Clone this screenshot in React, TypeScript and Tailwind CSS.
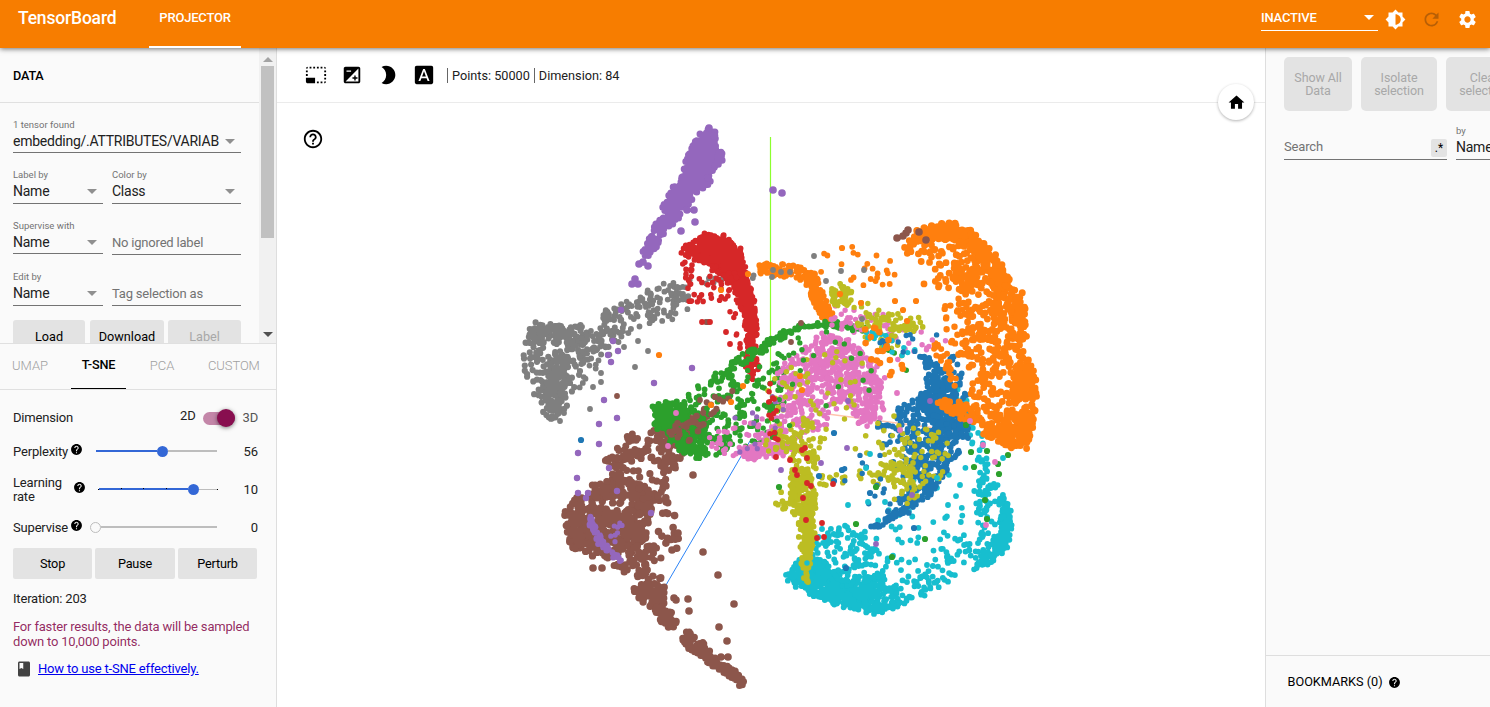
import React, { useMemo } from "react";
import {
  MdBrightness2,
  MdBrightness6,
  MdClass,
  MdExposure,
  MdFontDownload,
  MdHelp,
  MdHelpOutline,
  MdHome,
  MdPhotoSizeSelectSmall,
  MdRefresh,
  MdSettings,
} from "react-icons/md";

/* ---------- scatter plot ---------- */

type Cloud = { c: string; r: number; n: number; poly: number[] };
type Dots = { c: string; r: number; at: number[] };

const PURPLE = "#9467bd";
const RED = "#d62728";
const GREY = "#7f7f7f";
const ORANGE = "#ff7f0e";
const OLIVE = "#bcbd22";
const GREEN = "#2ca02c";
const PINK = "#e377c2";
const BLUE = "#1f77b4";
const CYAN = "#17becf";
const BROWN = "#8c564b";

const layers: (Cloud | Dots)[] = [
  // cyan arc
  { c: CYAN, r: 2.8, n: 230, poly: [784, 575, 795, 560, 812, 550, 826, 562, 850, 580, 880, 577, 905, 592, 920, 600, 900, 608, 885, 614, 868, 615, 842, 609, 818, 599, 800, 590, 786, 581] },
  { c: CYAN, r: 2.8, n: 250, poly: [784, 575, 795, 562, 812, 550, 835, 580, 870, 598, 910, 602, 885, 613, 860, 613, 818, 599, 800, 590] },
  { c: CYAN, r: 2.8, n: 90, poly: [835, 585, 850, 578, 880, 572, 886, 590, 870, 608] },
  { c: CYAN, r: 2.8, n: 110, poly: [812, 550, 818, 530, 850, 522, 880, 545, 888, 580, 840, 592] },
  { c: CYAN, r: 2.8, n: 60, poly: [815, 550, 825, 532, 880, 505, 915, 510, 960, 510, 975, 560, 920, 603, 880, 580] },
  { c: CYAN, r: 2.8, n: 45, poly: [880, 590, 925, 565, 960, 545, 985, 530, 992, 550, 960, 577, 915, 606] },
  { c: CYAN, r: 2.8, n: 145, poly: [970, 572, 985, 545, 998, 530, 1002, 495, 1010, 500, 1014, 520, 1008, 550, 985, 568] },
  { c: CYAN, r: 2.8, n: 65, poly: [972, 500, 980, 450, 988, 446, 992, 478, 1005, 490, 1010, 510, 994, 530, 978, 550, 975, 520] },
  { c: CYAN, r: 2.8, n: 48, poly: [955, 380, 968, 400, 985, 440, 992, 478, 980, 480, 970, 440, 950, 410] },
  { c: CYAN, r: 2.8, n: 16, poly: [915, 475, 960, 460, 985, 470, 990, 540, 940, 560, 880, 530] },
  { c: CYAN, r: 2.8, n: 10, poly: [860, 560, 920, 520, 960, 560, 940, 598] },
  // blue
  { c: BLUE, r: 2.8, n: 150, poly: [909, 352, 925, 355, 950, 370, 962, 395, 975, 415, 965, 430, 940, 440, 905, 435, 880, 428, 900, 405, 925, 380, 920, 362] },
  { c: BLUE, r: 2.8, n: 160, poly: [912, 352, 928, 354, 952, 375, 958, 400, 955, 425, 925, 425, 915, 405, 925, 385, 925, 368] },
  { c: BLUE, r: 2.8, n: 280, poly: [900, 440, 940, 420, 975, 418, 962, 450, 945, 480, 925, 502, 905, 520, 885, 512, 905, 490, 915, 465] },
  { c: BLUE, r: 2.8, n: 75, poly: [875, 420, 970, 405, 970, 440, 940, 480, 895, 490, 880, 470] },
  { c: BLUE, r: 2.8, n: 42, poly: [868, 526, 890, 514, 912, 500, 919, 504, 900, 516, 876, 530] },
  { c: BLUE, r: 2.8, n: 24, poly: [953, 345, 965, 370, 968, 400, 960, 420, 942, 375] },
  { c: OLIVE, r: 2.6, n: 58, poly: [875, 425, 930, 420, 955, 440, 948, 475, 915, 508, 890, 505, 900, 480, 875, 465] },
  { c: OLIVE, r: 2.6, n: 50, poly: [880, 465, 900, 458, 920, 472, 918, 490, 905, 502, 885, 480] },
  // orange sheet
  { c: ORANGE, r: 3.6, n: 130, poly: [912, 230, 925, 224, 948, 220, 972, 228, 976, 246, 960, 242, 930, 240, 910, 240] },
  { c: ORANGE, r: 3.3, n: 62, poly: [897, 240, 925, 235, 960, 243, 980, 270, 985, 320, 970, 300, 945, 290, 918, 296, 930, 265, 900, 254] },
  { c: ORANGE, r: 3.4, n: 130, poly: [955, 238, 985, 243, 1002, 262, 1013, 290, 1000, 305, 985, 290, 955, 295, 948, 265] },
  { c: ORANGE, r: 3.4, n: 100, poly: [968, 228, 980, 238, 1001, 256, 1012, 282, 1008, 300, 990, 275, 968, 250] },
  { c: ORANGE, r: 3.3, n: 330, poly: [975, 290, 1010, 285, 1027, 298, 1029, 350, 1038, 380, 1036, 420, 1027, 450, 1005, 450, 985, 438, 970, 420, 968, 390, 956, 350] },
  { c: ORANGE, r: 3.4, n: 60, poly: [1000, 280, 1015, 285, 1028, 298, 1029, 340, 1012, 360, 1005, 310] },
  { c: ORANGE, r: 3.4, n: 180, poly: [1015, 360, 1028, 360, 1038, 385, 1037, 420, 1028, 452, 1012, 452, 990, 442, 984, 430, 1005, 415] },
  { c: ORANGE, r: 3.1, n: 32, poly: [940, 300, 975, 290, 975, 350, 945, 345] },
  { c: ORANGE, r: 3.2, n: 38, poly: [935, 400, 960, 395, 978, 410, 986, 425, 970, 425, 945, 415] },
  { c: ORANGE, r: 2.9, n: 28, poly: [928, 338, 942, 342, 954, 368, 962, 380, 955, 392, 942, 365, 930, 348] },
  { c: ORANGE, r: 2.8, n: 24, poly: [820, 245, 855, 245, 895, 260, 897, 290, 855, 292, 820, 275] },
  { c: ORANGE, r: 3, n: 58, poly: [752, 264, 785, 262, 810, 267, 820, 280, 810, 286, 790, 278, 752, 276] },
  { c: ORANGE, r: 2.9, n: 120, poly: [802, 272, 816, 272, 824, 290, 834, 315, 830, 325, 820, 318, 810, 298] },
  // brown
  { c: BROWN, r: 3.6, n: 150, poly: [560, 517, 568, 498, 590, 488, 620, 487, 650, 500, 645, 545, 630, 555, 610, 560, 590, 558, 568, 547] },
  { c: BROWN, r: 3.6, n: 210, poly: [562, 515, 582, 492, 600, 505, 650, 510, 650, 540, 615, 562, 590, 555, 568, 547] },
  { c: BROWN, r: 3.5, n: 95, poly: [590, 484, 615, 475, 640, 480, 660, 500, 650, 520, 630, 500, 585, 502] },
  { c: BROWN, r: 3.5, n: 52, poly: [600, 468, 615, 450, 655, 448, 668, 470, 672, 505, 645, 500, 600, 482] },
  { c: BROWN, r: 3.4, n: 65, poly: [604, 458, 630, 432, 655, 436, 652, 455, 680, 452, 680, 470, 660, 477, 655, 460, 604, 464] },
  { c: BROWN, r: 3.4, n: 78, poly: [648, 430, 675, 418, 700, 406, 716, 405, 700, 435, 682, 465, 655, 448] },
  { c: BROWN, r: 3.5, n: 52, poly: [612, 566, 622, 550, 655, 536, 662, 560, 650, 575, 630, 582] },
  { c: BROWN, r: 3.6, n: 60, poly: [630, 588, 650, 574, 662, 576, 668, 592, 668, 605, 655, 612, 644, 606] },
  { c: BROWN, r: 3.6, n: 48, poly: [650, 606, 668, 602, 680, 626, 672, 633, 658, 620] },
  { c: BROWN, r: 3.4, n: 110, poly: [676, 638, 688, 630, 710, 645, 716, 657, 740, 672, 749, 684, 740, 687, 710, 668, 690, 652] },
  { c: BROWN, r: 3.7, n: 20, poly: [655, 460, 672, 480, 685, 545, 675, 555, 655, 540] },
  { c: PURPLE, r: 2.8, n: 22, poly: [584, 510, 592, 515, 602, 530, 612, 548, 629, 562, 624, 566, 607, 555, 592, 540, 584, 520] },
  { c: PURPLE, r: 2.8, n: 34, poly: [584, 512, 594, 518, 606, 540, 615, 548, 629, 558, 624, 567, 605, 552, 590, 535] },
  { c: PURPLE, r: 2.5, n: 8, poly: [608, 520, 625, 523, 622, 545, 612, 550] },
  // grey
  { c: GREY, r: 3, n: 190, poly: [519, 335, 535, 320, 560, 325, 585, 322, 586, 350, 580, 385, 570, 402, 562, 420, 545, 423, 536, 400, 524, 375, 516, 350] },
  { c: GREY, r: 2.9, n: 185, poly: [520, 335, 540, 322, 580, 325, 590, 333, 570, 355, 567, 395, 557, 423, 545, 420, 545, 385, 553, 350] },
  { c: GREY, r: 2.9, n: 65, poly: [570, 328, 590, 325, 610, 302, 630, 305, 633, 330, 610, 350, 585, 365, 578, 350] },
  { c: GREY, r: 2.8, n: 75, poly: [595, 315, 630, 297, 665, 280, 692, 280, 675, 318, 650, 326, 640, 315, 605, 328] },
  { c: GREY, r: 2.8, n: 20, poly: [620, 300, 635, 290, 690, 282, 698, 310, 640, 335] },
  { c: GREY, r: 2.8, n: 28, poly: [665, 282, 700, 276, 770, 265, 770, 276, 700, 292, 680, 310] },
  { c: GREY, r: 2.8, n: 24, poly: [580, 330, 618, 325, 620, 345, 600, 370, 578, 395] },
  // red
  { c: RED, r: 2.8, n: 120, poly: [674, 258, 680, 245, 705, 232, 725, 233, 742, 250, 746, 275, 720, 275, 700, 258] },
  { c: RED, r: 2.8, n: 360, poly: [677, 250, 695, 238, 715, 232, 728, 236, 743, 250, 748, 275, 755, 302, 745, 310, 735, 290, 722, 280, 710, 266, 690, 260] },
  { c: RED, r: 2.7, n: 52, poly: [682, 260, 740, 270, 745, 310, 720, 305, 688, 305] },
  { c: RED, r: 2.8, n: 170, poly: [732, 285, 750, 275, 755, 300, 759, 332, 754, 350, 747, 350, 743, 320] },
  { c: RED, r: 2.7, n: 44, poly: [744, 333, 759, 333, 760, 365, 756, 387, 742, 365] },
  { c: RED, r: 2.6, n: 6, poly: [720, 300, 735, 310, 745, 345, 730, 350] },
  // green
  { c: GREEN, r: 3, n: 200, poly: [651, 405, 665, 400, 680, 401, 700, 410, 712, 435, 702, 460, 685, 457, 665, 437, 650, 425] },
  { c: GREEN, r: 3, n: 130, poly: [653, 404, 675, 400, 688, 408, 685, 430, 653, 428] },
  { c: GREEN, r: 2.8, n: 115, poly: [675, 398, 705, 380, 740, 355, 735, 375, 750, 395, 745, 430, 715, 460, 690, 462, 695, 420] },
  { c: GREEN, r: 2.8, n: 50, poly: [704, 380, 725, 365, 745, 350, 775, 333, 770, 350, 740, 370, 712, 388] },
  { c: GREEN, r: 2.8, n: 90, poly: [762, 340, 800, 324, 840, 319, 870, 325, 866, 335, 830, 328, 800, 331, 770, 347] },
  { c: GREEN, r: 2.6, n: 90, poly: [740, 370, 790, 345, 785, 400, 770, 450, 715, 455, 735, 410] },
  { c: BROWN, r: 3.2, n: 22, poly: [652, 436, 670, 425, 700, 410, 712, 420, 690, 443] },
  { c: BROWN, r: 3, n: 12, poly: [690, 420, 720, 385, 750, 370, 750, 382, 720, 412, 700, 430] },
  // pink
  { c: PINK, r: 2.7, n: 230, poly: [776, 370, 795, 345, 825, 330, 850, 338, 870, 355, 886, 375, 885, 420, 865, 430, 840, 410, 810, 405, 776, 415] },
  { c: PINK, r: 2.7, n: 220, poly: [815, 335, 845, 335, 870, 355, 883, 382, 878, 420, 860, 428, 842, 400, 815, 370] },
  { c: PINK, r: 2.7, n: 165, poly: [775, 370, 820, 345, 840, 400, 830, 430, 790, 445, 740, 460, 745, 440, 778, 415] },
  { c: PINK, r: 2.7, n: 85, poly: [727, 450, 755, 443, 790, 440, 800, 448, 780, 458, 745, 461] },
  { c: PINK, r: 2.6, n: 38, poly: [690, 440, 770, 410, 775, 440, 730, 460] },
  { c: PINK, r: 2.6, n: 42, poly: [830, 290, 855, 305, 890, 315, 895, 340, 860, 340, 830, 325] },
  { c: PINK, r: 2.6, n: 22, poly: [860, 315, 945, 330, 950, 350, 905, 370, 880, 350] },
  // olive
  { c: OLIVE, r: 2.7, n: 45, poly: [828, 288, 840, 283, 853, 287, 852, 305, 835, 308, 826, 300] },
  { c: OLIVE, r: 2.7, n: 42, poly: [870, 318, 895, 310, 926, 318, 925, 333, 890, 332, 870, 328] },
  { c: OLIVE, r: 2.6, n: 45, poly: [840, 285, 870, 295, 900, 315, 905, 365, 870, 345, 845, 320] },
  { c: OLIVE, r: 2.6, n: 58, poly: [765, 380, 810, 340, 860, 350, 870, 400, 820, 450, 765, 455] },
  { c: OLIVE, r: 2.7, n: 85, poly: [768, 450, 780, 438, 812, 438, 820, 460, 810, 490, 785, 490, 790, 455] },
  { c: OLIVE, r: 2.7, n: 25, poly: [775, 425, 820, 415, 815, 445, 780, 450] },
  { c: OLIVE, r: 2.8, n: 220, poly: [796, 475, 812, 475, 818, 505, 816, 535, 812, 560, 810, 584, 803, 586, 800, 560, 797, 525, 790, 500] },
  { c: OLIVE, r: 2.8, n: 40, poly: [770, 510, 782, 485, 800, 480, 815, 495, 815, 520, 790, 513] },
  { c: OLIVE, r: 2.7, n: 38, poly: [815, 470, 850, 470, 915, 460, 918, 485, 870, 485, 820, 490] },
  { c: OLIVE, r: 2.7, n: 12, poly: [850, 425, 890, 410, 925, 440, 900, 465, 850, 460] },
  { c: GREEN, r: 2.6, n: 30, poly: [770, 340, 860, 320, 915, 370, 870, 400, 800, 420, 765, 450] },
  { c: CYAN, r: 2.6, n: 16, poly: [850, 322, 890, 330, 920, 350, 900, 358, 860, 335] },
  { c: BLUE, r: 2.6, n: 10, poly: [855, 325, 945, 330, 935, 350, 895, 358] },
  { c: ORANGE, r: 3.2, n: 20, poly: [860, 325, 905, 320, 908, 375, 885, 378, 868, 370] },
  { c: PURPLE, r: 2.5, n: 12, poly: [715, 430, 770, 385, 800, 420, 775, 470, 735, 465] },
  { c: RED, r: 2.6, n: 14, poly: [765, 375, 780, 380, 778, 410, 785, 450, 768, 440] },
  { c: BLUE, r: 2.6, n: 14, poly: [820, 470, 880, 445, 895, 475, 890, 540, 865, 510] },
  // purple arm
  { c: PURPLE, r: 3.4, n: 440, poly: [704, 129, 711, 124, 718, 136, 718, 160, 712, 182, 700, 192, 689, 206, 676, 222, 663, 238, 653, 256, 641, 260, 644, 242, 657, 218, 669, 192, 681, 172, 684, 156, 692, 142] },
  { c: PURPLE, r: 3.4, n: 16, poly: [715, 146, 721, 147, 725, 158, 720, 168, 712, 168] },
  // individual points
  { c: PURPLE, r: 3.7, at: [709, 128, 714, 136, 639, 264, 648, 266, 643, 262, 635, 282, 632, 284, 638, 284, 635, 279, 695, 222, 681, 231, 694, 210, 687, 210, 708, 178, 773, 190, 782, 193] },
  { c: PURPLE, r: 3.1, at: [621, 310, 613, 341, 618, 351, 608, 355, 611, 362, 692, 368, 654, 383, 604, 400, 617, 418, 599, 424, 578, 453, 609, 468, 577, 478, 578, 493, 588, 493, 586, 498, 599, 444, 617, 491, 651, 513] },
  { c: PURPLE, r: 2.8, at: [847, 448, 821, 463, 781, 470, 876, 544, 912, 495, 848, 401, 930, 401] },
  { c: GREY, r: 2.8, at: [814, 256, 841, 271, 864, 270, 826, 281, 781, 272, 790, 272, 862, 319, 772, 277, 773, 270, 638, 341, 648, 351, 635, 367, 601, 373, 593, 387, 601, 382, 590, 409, 564, 413, 560, 421, 582, 338, 624, 347] },
  { c: GREEN, r: 3, at: [1008, 455, 971, 452, 974, 467, 999, 474, 985, 500, 987, 519, 925, 539, 892, 557, 856, 524, 779, 487, 998, 464, 987, 451, 876, 487, 966, 425] },
  { c: BROWN, r: 3.7, at: [903, 236, 897, 238, 908, 230, 906, 233, 919, 232, 926, 240, 693, 475, 703, 552, 718, 575, 734, 604, 719, 627, 727, 641, 688, 599, 674, 598, 689, 611, 676, 600, 678, 533, 672, 550, 593, 568, 602, 568, 721, 657, 728, 657] },
  { c: BROWN, r: 2.8, at: [617, 396, 706, 322, 708, 322, 801, 323, 791, 342, 700, 400] },
  { c: ORANGE, r: 3, at: [659, 355, 721, 290, 842, 248, 916, 301, 895, 301, 861, 303, 743, 386, 711, 405, 731, 402, 903, 310, 800, 376, 802, 390, 840, 294, 907, 321, 748, 274] },
  { c: BLUE, r: 3, at: [581, 440, 819, 476, 834, 481, 870, 493, 842, 470, 834, 433, 846, 568, 914, 528] },
  { c: RED, r: 2.8, at: [795, 470, 797, 475, 807, 483, 811, 486, 803, 498, 822, 523, 824, 537, 817, 538, 776, 457, 790, 460, 807, 458, 802, 450, 833, 484, 806, 520, 702, 322, 710, 322, 726, 332, 730, 344, 740, 348, 805, 448] },
  { c: PINK, r: 2.8, at: [983, 445, 995, 462, 986, 525, 900, 430, 897, 393, 676, 413, 668, 446, 970, 421] },
  { c: CYAN, r: 2.8, at: [870, 454, 848, 505, 866, 468, 885, 502, 937, 478, 868, 502, 1003, 458, 960, 485, 948, 505, 822, 529] },
  { c: CYAN, r: 2.6, at: [807, 563] },
];

function insideInset(x: number, y: number, p: number[], pad: number) {
  let inside = false;
  const n = p.length / 2;
  for (let i = 0, j = n - 1; i < n; j = i++) {
    const ax = p[2 * i];
    const ay = p[2 * i + 1];
    const bx = p[2 * j];
    const by = p[2 * j + 1];
    if (ay > y !== by > y && x < ((bx - ax) * (y - ay)) / (by - ay) + ax) inside = !inside;
    const dx = bx - ax;
    const dy = by - ay;
    const t = Math.max(0, Math.min(1, ((x - ax) * dx + (y - ay) * dy) / (dx * dx + dy * dy)));
    if (Math.hypot(x - ax - t * dx, y - ay - t * dy) < pad) return false;
  }
  return inside;
}

function buildPaths() {
  let seed = 20231;
  const rnd = () => {
    seed = (seed * 1664525 + 1013904223) >>> 0;
    return seed / 4294967296;
  };
  return layers.map((l) => {
    let d = "";
    if ("at" in l) {
      for (let i = 0; i < l.at.length; i += 2) d += `M${l.at[i]} ${l.at[i + 1]}h.01`;
    } else {
      const xs = l.poly.filter((_, i) => i % 2 === 0);
      const ys = l.poly.filter((_, i) => i % 2 === 1);
      const x0 = Math.min(...xs);
      const y0 = Math.min(...ys);
      const w = Math.max(...xs) - x0;
      const h = Math.max(...ys) - y0;
      for (let k = 0, tries = 0; k < l.n && tries < 40000; tries++) {
        const x = x0 + rnd() * w;
        const y = y0 + rnd() * h;
        if (insideInset(x, y, l.poly, l.r * 0.6)) {
          // a little scatter past the outline keeps the cluster edges ragged
          const jx = x + (rnd() - 0.5) * 3.4;
          const jy = y + (rnd() - 0.5) * 3.4;
          d += `M${jx.toFixed(1)} ${jy.toFixed(1)}h.01`;
          k++;
        }
      }
    }
    return { d, c: l.c, w: l.r * 2 + 0.2 };
  });
}

function Scatter() {
  const paths = useMemo(buildPaths, []);
  return (
    <svg className="block h-[604px] w-[988px]" viewBox="277 103 988 604">
      <path d="M770.5 137V440" stroke="#8cff2e" strokeWidth="1.2" />
      <path d="M750 441L666 585" stroke="#2b83f6" strokeWidth="1" />
      <path d="M820 413L958 431" stroke="#ffc4ae" strokeWidth="1.5" />
      {paths.map((p, i) => (
        <path key={i} d={p.d} stroke={p.c} strokeWidth={p.w} strokeLinecap="round" fill="none" />
      ))}
    </svg>
  );
}

/* ---------- controls ---------- */

function Caret({ className = "text-[#8f8f8f]" }: { className?: string }) {
  return (
    <svg viewBox="0 0 10 5" className={`h-[5px] w-[10px] shrink-0 ${className}`}>
      <path d="M0 0h10L5 5z" fill="currentColor" />
    </svg>
  );
}

function Select({ label, value, className }: { label: string; value: string; className: string }) {
  return (
    <div className={`flex flex-col border-b border-[#737373] ${className}`}>
      <span className="h-3 text-[9.5px] leading-3 text-[#737373]">{label}</span>
      <div className="flex h-5 items-center justify-between pr-[6px]">
        <span className="pb-px text-[14px] leading-[18px] tracking-[-0.25px] whitespace-nowrap text-[#212121]">{value}</span>
        <Caret />
      </div>
    </div>
  );
}

function TextInput({ hint }: { hint: string }) {
  return (
    <div className="flex h-[35px] w-[129px] items-end border-b border-[#737373] pb-[3px] text-[13px] leading-[17px] tracking-[-0.2px] text-[#737373]">
      {hint}
    </div>
  );
}

function Slider({ at, empty, ticks }: { at: string; empty?: boolean; ticks?: boolean }) {
  return (
    <div className="flex h-3 items-center">
      {ticks && <div className="size-px bg-black" />}
      {ticks ? (
        <div className={`flex h-[2px] justify-evenly bg-[#3367d6] ${at}`}>
          <div className="size-px bg-black" />
          <div className="size-px bg-black" />
          <div className="size-px bg-black" />
        </div>
      ) : (
        <div className={`h-[2px] bg-[#3367d6] ${at}`} />
      )}
      <div className={`size-[11px] shrink-0 rounded-full ${empty ? "border border-[#bdbdbd] bg-[#fafafa]" : "bg-[#3367d6]"}`} />
      <div className={`grow bg-[#bdbdbd] ${ticks ? "h-px" : "h-[2px]"}`} />
      {ticks && <div className="size-px bg-black" />}
    </div>
  );
}

function SettingRow({ label, value, className, children, labelClass, trackClass }: {
  label: string; value: string; className: string; labelClass: string; trackClass: string; children: React.ReactNode;
}) {
  return (
    <div className={`flex items-center ${className}`}>
      <span className={`pt-px leading-[14px] ${labelClass}`}>{label}</span>
      <MdHelp className="mb-[3px] size-[13px] shrink-0 text-black" />
      <div className={trackClass}>{children}</div>
      <span className="ml-auto pt-px tracking-normal">{value}</span>
    </div>
  );
}

const flat = "flex items-center justify-center bg-[#e3e3e3] text-[12.7px]";

export default function App() {
  return (
    <div className="flex h-[707px] w-[1490px] flex-col overflow-hidden bg-white font-['Roboto',sans-serif] text-[#212121]">
      <header className="relative z-10 flex h-12 shrink-0 items-start bg-[#f77d00] text-white shadow-[0_1px_5px_rgba(0,0,0,0.55)]">
        <h1 className="mt-[6px] ml-[18px] w-[131px] text-[17.5px] leading-6 font-medium tracking-[-0.18px]">TensorBoard</h1>
        <div className="flex h-12 w-[92px] justify-center border-b-2 border-white pt-[8px] text-[13px] leading-5 font-medium tracking-[-0.2px]">PROJECTOR</div>
        <div className="mt-[5px] ml-auto flex h-[26px] w-[117px] items-center justify-between border-b border-white pr-1 text-[13px] font-medium tracking-[-0.2px]">
          INACTIVE
          <Caret className="text-white" />
        </div>
        <MdBrightness6 className="mt-[9px] ml-[7px] size-[21px]" />
        <MdRefresh className="mt-[9px] ml-[15px] size-[21px] text-[#b85f05]" />
        <MdSettings className="mt-[9px] mr-[12px] ml-[15px] size-[21px]" />
      </header>

      <div className="flex min-h-0 grow">
        <aside className="flex w-[277px] shrink-0 flex-col border-r border-[#dedede] bg-[#fafafa]">
          <section className="flex h-[295px] shrink-0 overflow-hidden">
            <div className="w-[259px] shrink-0">
              <div className="flex h-[55px] items-center border-b border-[#e0e0e0] pt-px pl-[13px] text-[12.7px] font-medium tracking-[-0.2px] text-black">DATA</div>
              <div className="pt-4 pl-[13px]">
                <Select label="1 tensor found" value="embedding/.ATTRIBUTES/VARIAB" className="h-[34px] w-[228px]" />
                <div className="mt-4 flex gap-[9px]">
                  <Select label="Label by" value="Name" className="h-[35px] w-[90px]" />
                  <Select label="Color by" value="Class" className="h-[35px] w-[129px]" />
                </div>
                <div className="mt-4 flex gap-[9px]">
                  <Select label="Supervise with" value="Name" className="h-[34px] w-[90px]" />
                  <TextInput hint="No ignored label" />
                </div>
                <div className="mt-4 flex gap-[9px]">
                  <Select label="Edit by" value="Name" className="h-[35px] w-[90px]" />
                  <TextInput hint="Tag selection as" />
                </div>
                <div className="mt-[14px] flex h-[33px]">
                  <div className={`${flat} w-[72px] rounded-[3px] text-black`}>Load</div>
                  <div className={`${flat} ml-[5px] w-[74px] rounded-[3px] text-black`}>Download</div>
                  <div className={`${flat} ml-1 w-[73px] rounded-[3px] text-[#a8a8a8]`}>Label</div>
                </div>
              </div>
            </div>
            <div className="flex w-[17px] flex-col items-center bg-[#f1f1f1]">
              <div className="flex h-[18px] items-center pt-1"><Caret className="h-[4px] w-[7px] rotate-180 text-[#a3a3a3]" /></div>
              <div className="h-[172px] w-[13px] bg-[#c1c1c1]" />
              <div className="mt-auto flex h-[18px] items-center"><Caret className="h-[4px] w-[7px] text-[#505050]" /></div>
            </div>
          </section>

          <nav className="flex h-[47px] shrink-0 border-y border-[#e0e0e0] text-[13px] leading-[44px] text-[#a0a0a0]">
            <span className="w-[71px] pl-[12px] font-light">UMAP</span>
            <span className="w-[55px] border-b border-black text-center text-[12.7px] leading-[42px] font-medium tracking-[-0.2px] text-black">T-SNE</span>
            <span className="w-[72px] text-center font-light">PCA</span>
            <span className="pl-[10px] font-light tracking-[-0.1px]">CUSTOM</span>
          </nav>

          <section className="flex flex-col pr-[18px] pl-[13px] text-[13px] tracking-[-0.18px]">
            <div className="mt-[16px] flex h-6 items-center">
              <span>Dimension</span>
              <span className="mb-[4px] ml-auto">2D</span>
              <div className="mr-2 ml-[7px] flex h-[13px] w-[32px] items-center justify-end rounded-full bg-[#c386a8]">
                <div className="size-[18px] shrink-0 rounded-full bg-[#880e4f] shadow-[0_1px_4px_rgba(0,0,0,0.5)]" />
              </div>
              <span className="text-[#555]">3D</span>
            </div>
            <SettingRow label="Perplexity" value="56" className="mt-[9px] h-6" labelClass="w-[57px]" trackClass="ml-[13px] w-[121px]">
              <Slider at="w-[61px]" />
            </SettingRow>
            <SettingRow label="Learning rate" value="10" className="mt-[11px] h-[30px]" labelClass="w-[60px]" trackClass="ml-[12px] w-[120px]">
              <Slider at="w-[89px]" ticks />
            </SettingRow>
            <SettingRow label="Supervise" value="0" className="mt-[11px] h-6" labelClass="w-[57px]" trackClass="ml-[7px] w-[127px]">
              <Slider at="w-0" empty />
            </SettingRow>
            <div className="mt-[9px] -mr-px flex h-[31px] gap-[3px] text-black">
              <div className={`${flat} w-[79px] rounded-[2px]`}>Stop</div>
              <div className={`${flat} w-[80px] rounded-[2px]`}>Pause</div>
              <div className={`${flat} w-[79px] rounded-[2px]`}>Perturb</div>
            </div>
            <p className="mt-[12px] leading-[15px]">Iteration: 203</p>
            <p className="mt-[13px] w-[245px] leading-[15px] text-[#880e4f]/90">For faster results, the data will be sampled down to 10,000 points.</p>
            <div className="mt-[10px] ml-[2px] flex items-center">
              <MdClass className="size-[18px] text-[#424242]" />
              <a className="ml-[5px] text-[#0000ee] underline">How to use t-SNE effectively.</a>
            </div>
          </section>
        </aside>

        <main className="relative w-[988px] shrink-0 bg-white">
          <div className="flex h-[55px] items-center border-b border-[#ebebeb] pl-[28px] text-black">
            <MdPhotoSizeSelectSmall className="size-[22px]" />
            <MdExposure className="ml-[14.3px] size-[22px]" />
            <MdBrightness2 className="ml-[14px] size-[22px]" />
            <MdFontDownload className="ml-[14px] size-[22px]" />
            <div className="ml-[11.7px] flex gap-1 text-[12.7px] leading-[15px] text-[#212121]">
              <span className="border-l border-[#666] pl-1">Points: 50000</span>
              <span className="border-l border-[#666] pl-1">Dimension: 84</span>
            </div>
          </div>
          <Scatter />
          <MdHelpOutline className="absolute top-[80px] left-[25px] size-[22px] text-black" />
          <div className="absolute top-[36px] left-[941px] flex size-9 items-center justify-center rounded-full bg-white shadow-[0_1px_3px_rgba(0,0,0,0.3)]">
            <MdHome className="size-[19px] text-black" />
          </div>
        </main>

        <aside className="flex w-[225px] shrink-0 flex-col overflow-hidden border-l border-[#dedede] bg-[#fafafa]">
          <div className="flex pt-[9px] pl-[18px] text-center text-[12.5px] leading-[13px] tracking-[-0.1px] text-[#a8a8a8]">
            <div className="flex h-[54px] w-[68px] shrink-0 items-center justify-center rounded-[5px] bg-[#e3e3e3]">Show All<br />Data</div>
            <div className="ml-[9px] flex h-[54px] w-[76px] shrink-0 items-center justify-center rounded-[5px] bg-[#e3e3e3]">Isolate<br />selection</div>
            <div className="ml-[9px] flex h-[54px] w-[76px] shrink-0 items-center justify-center rounded-[5px] bg-[#e3e3e3]">Clear<br />selection</div>
          </div>
          <div className="mt-[14px] flex h-[35px] pl-[18px]">
            <div className="flex w-[163px] shrink-0 items-end justify-between border-b border-[#737373] text-[13px] text-[#737373]">
              <span className="mb-[2px] leading-[20px] tracking-[-0.15px]">Search</span>
              <span className="mb-[2px] flex h-[18px] w-4 items-center justify-center rounded-[2px] bg-[#e3e3e3] text-[12px] text-black">.*</span>
            </div>
            <Select label="by" value="Name" className="ml-[9px] h-[35px] w-[90px] shrink-0" />
          </div>
          <div className="mt-auto flex h-[52px] items-center border-t border-[#dedede] pt-px pl-[21.5px] text-[12.7px] text-black">
            BOOKMARKS (0)
            <MdHelp className="ml-[5px] size-[13px]" />
          </div>
        </aside>
      </div>
    </div>
  );
}
